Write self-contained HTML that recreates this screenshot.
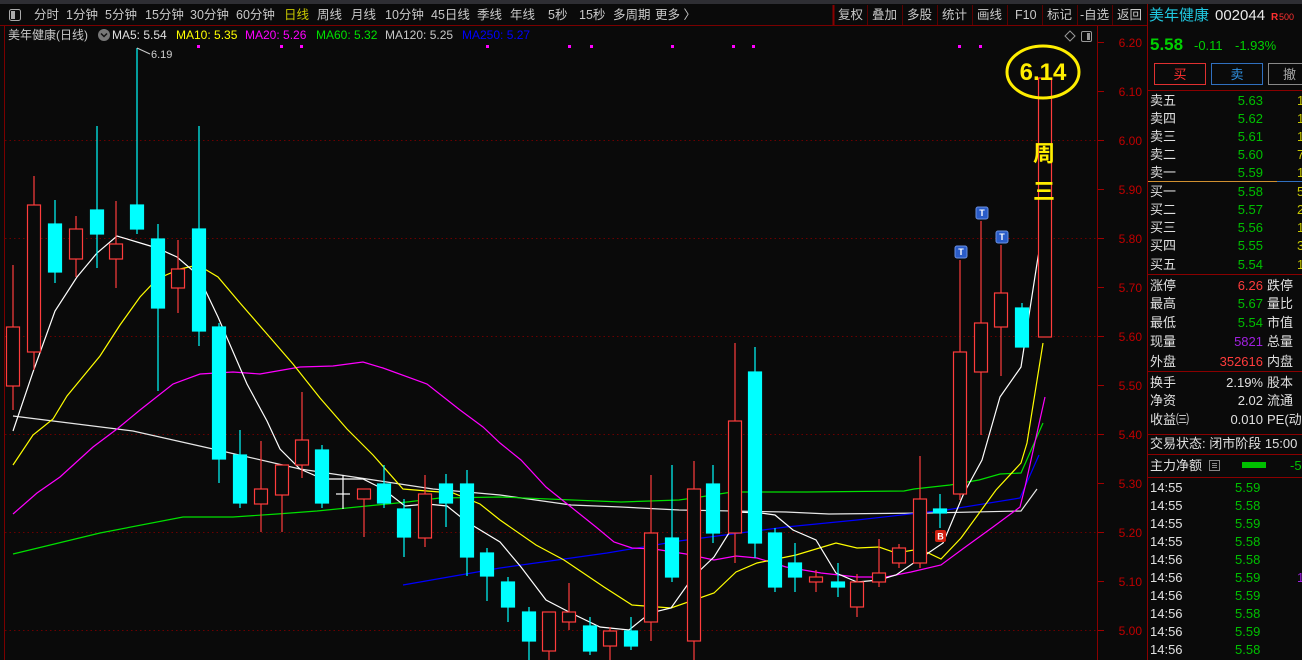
<!DOCTYPE html>
<html><head><meta charset="utf-8"><style>
html,body{margin:0;padding:0;background:#0a0a0a;width:1302px;height:660px;overflow:hidden}
svg{display:block}
text{font-family:"Liberation Sans","Noto Sans CJK SC",sans-serif}
</style></head><body>
<svg width="1302" height="660" viewBox="0 0 1302 660" xmlns="http://www.w3.org/2000/svg">
<rect width="1302" height="660" fill="#0a0a0a"/>
<!-- top strip -->
<rect x="0" y="0" width="1302" height="4" fill="#2e2e33"/>
<line x1="0" y1="25.5" x2="1147" y2="25.5" stroke="#7a0000"/>
<line x1="4.5" y1="26" x2="4.5" y2="660" stroke="#7a0000"/>
<line x1="1097.5" y1="26" x2="1097.5" y2="660" stroke="#8a0000"/>
<line x1="1147.5" y1="4" x2="1147.5" y2="660" stroke="#8a0000"/>
<line x1="833.5" y1="5" x2="833.5" y2="25" stroke="#8a0000" stroke-width="2"/>
<g stroke="#5a0000"><line x1="867.5" y1="5" x2="867.5" y2="25"/><line x1="902.5" y1="5" x2="902.5" y2="25"/><line x1="937.5" y1="5" x2="937.5" y2="25"/><line x1="972.5" y1="5" x2="972.5" y2="25"/><line x1="1007.5" y1="5" x2="1007.5" y2="25"/><line x1="1042.5" y1="5" x2="1042.5" y2="25"/><line x1="1077.5" y1="5" x2="1077.5" y2="25"/><line x1="1112.5" y1="5" x2="1112.5" y2="25"/></g>
<rect x="9.5" y="9.5" width="11" height="11" rx="2" fill="none" stroke="#aaa"/><rect x="11" y="11" width="4" height="8" fill="#aaa"/>
<g font-size="12.5" fill="#c8c8c8">
<text x="34" y="19">分时</text><text x="66" y="19">1分钟</text><text x="105" y="19">5分钟</text><text x="145" y="19">15分钟</text><text x="190" y="19">30分钟</text><text x="236" y="19">60分钟</text><text x="284" y="19" fill="#c8c800">日线</text><text x="317" y="19">周线</text><text x="351" y="19">月线</text><text x="385" y="19">10分钟</text><text x="431" y="19">45日线</text><text x="477" y="19">季线</text><text x="510" y="19">年线</text><text x="548" y="19">5秒</text><text x="579" y="19">15秒</text><text x="613" y="19">多周期</text><text x="655" y="19">更多 〉</text>
<text x="838" y="19">复权</text><text x="872" y="19">叠加</text><text x="907" y="19">多股</text><text x="942" y="19">统计</text><text x="977" y="19">画线</text><text x="1015" y="19">F10</text><text x="1047" y="19">标记</text><text x="1080" y="19">-自选</text><text x="1117" y="19">返回</text>
</g>
<!-- legend -->
<g font-size="12">
<text x="8" y="39" fill="#c8c8c8">美年健康(日线)</text>
<circle cx="104" cy="35" r="6" fill="#777"/><path d="M101 33.5l3 3 3-3" stroke="#111" stroke-width="1.5" fill="none"/>
<text x="112" y="39" fill="#e0e0e0">MA5: 5.54</text>
<text x="176" y="39" fill="#ffff00">MA10: 5.35</text>
<text x="245" y="39" fill="#ff00ff">MA20: 5.26</text>
<text x="316" y="39" fill="#00e000">MA60: 5.32</text>
<text x="385" y="39" fill="#c8c8c8">MA120: 5.25</text>
<text x="462" y="39" fill="#0000ff">MA250: 5.27</text>
</g>
<g fill="#ff00ff"><rect x="197" y="45" width="3" height="3"/><rect x="280" y="45" width="3" height="3"/><rect x="300" y="45" width="3" height="3"/><rect x="486" y="45" width="3" height="3"/><rect x="568" y="45" width="3" height="3"/><rect x="590" y="45" width="3" height="3"/><rect x="671" y="45" width="3" height="3"/><rect x="732" y="45" width="3" height="3"/><rect x="752" y="45" width="3" height="3"/><rect x="958" y="45" width="3" height="3"/><rect x="979" y="45" width="3" height="3"/></g>
<path d="M1070 31l5 5-5 5-5-5z" fill="none" stroke="#999"/>
<rect x="1081.5" y="31.5" width="10" height="10" rx="1.5" fill="none" stroke="#999"/><rect x="1087" y="33" width="3" height="7" fill="#999"/>
<!-- grid -->
<g stroke="#6a0000" stroke-dasharray="1.5 3">
<line x1="5" y1="140.5" x2="1097" y2="140.5"/><line x1="5" y1="238.5" x2="1097" y2="238.5"/><line x1="5" y1="336.5" x2="1097" y2="336.5"/><line x1="5" y1="434.5" x2="1097" y2="434.5"/><line x1="5" y1="532.5" x2="1097" y2="532.5"/><line x1="5" y1="630.5" x2="1097" y2="630.5"/>
</g>
<!-- axis -->
<g stroke="#a00000">
<line x1="1098" y1="42.5" x2="1104" y2="42.5"/><line x1="1098" y1="91.5" x2="1104" y2="91.5"/><line x1="1098" y1="140.5" x2="1104" y2="140.5"/><line x1="1098" y1="189.5" x2="1104" y2="189.5"/><line x1="1098" y1="238.5" x2="1104" y2="238.5"/><line x1="1098" y1="287.5" x2="1104" y2="287.5"/><line x1="1098" y1="336.5" x2="1104" y2="336.5"/><line x1="1098" y1="385.5" x2="1104" y2="385.5"/><line x1="1098" y1="434.5" x2="1104" y2="434.5"/><line x1="1098" y1="483.5" x2="1104" y2="483.5"/><line x1="1098" y1="532.5" x2="1104" y2="532.5"/><line x1="1098" y1="581.5" x2="1104" y2="581.5"/><line x1="1098" y1="630.5" x2="1104" y2="630.5"/>
</g>
<g font-size="12" fill="#c00000" text-anchor="end">
<text x="1142" y="47">6.20</text><text x="1142" y="96">6.10</text><text x="1142" y="145">6.00</text><text x="1142" y="194">5.90</text><text x="1142" y="243">5.80</text><text x="1142" y="292">5.70</text><text x="1142" y="341">5.60</text><text x="1142" y="390">5.50</text><text x="1142" y="439">5.40</text><text x="1142" y="488">5.30</text><text x="1142" y="537">5.20</text><text x="1142" y="586">5.10</text><text x="1142" y="635">5.00</text>
</g>
<!-- MA lines -->
<g fill="none" stroke-width="1.2">
<polyline stroke="#e6e6e6" points="13,416 133,431 213,449 300,469 367,479 433,489 500,495 571,505 621,507 679,510 786,512 829,514 929,513 1021,511 1037,489"/>
<polyline stroke="#00e000" points="13,554 100,533 183,517 233,517 277,514 317,511 367,506 407,502 440,498 500,497 621,502 650,501 679,500 700,497 732,492 807,492 904,491 914,489 950,485 979,480 1000,474 1021,473 1043,423"/>
<polyline stroke="#0000ff" points="403,585 500,568 607,553 679,541 786,527 857,520 946,510 1020,498 1039,455"/>
<polyline stroke="#ff00ff" points="13,514 37,493 60,477 93,447 117,429 140,410 173,384 200,374 233,372 260,374 300,367 333,366 363,362 383,368 427,384 460,410 483,427 500,443 521,460 546,487 571,507 596,527 614,542 632,548 654,549 686,554 714,560 736,556 757,558 786,567 821,573 857,577 886,577 911,572 941,565 964,548 993,527 1020,507 1025,487 1045,397"/>
<polyline stroke="#ffff00" points="13,465 33,435 53,419 67,396 100,356 120,325 140,297 157,279 180,269 198,265 218,277 240,303 267,334 293,364 320,398 347,429 373,455 403,489 427,491 453,493 480,504 500,520 536,545 564,560 604,587 632,605 671,608 714,593 736,572 757,563 796,555 836,543 857,548 879,547 896,553 920,549 941,559 961,538 996,490 1021,463 1027,443 1043,343"/>
<polyline stroke="#ffffff" points="13,431 33,372 55,311 77,277 97,253 117,236 137,242 157,248 177,257 198,275 218,317 247,384 267,421 280,449 300,469 323,479 343,479 363,479 383,489 405,506 427,504 447,506 467,522 500,542 521,567 546,600 571,613 600,627 629,630 650,613 671,608 693,577 714,557 729,533 736,512 761,513 775,515 793,530 816,540 836,573 857,582 879,580 896,575 918,560 943,543 964,493 982,460 1000,397 1021,367 1038,257 1044,228"/>
</g>
<!-- candles -->
<g stroke="#ff3c3c" fill="#0a0a0a" stroke-width="1.2">
<line x1="13" y1="265" x2="13" y2="410"/><rect x="6.5" y="327" width="13" height="59"/>
<line x1="34" y1="176" x2="34" y2="370"/><rect x="27.5" y="205" width="13" height="147"/>
<line x1="76" y1="216" x2="76" y2="277"/><rect x="69.5" y="229" width="13" height="30"/>
<line x1="116" y1="201" x2="116" y2="288"/><rect x="109.5" y="244" width="13" height="15"/>
<line x1="178" y1="240" x2="178" y2="313"/><rect x="171.5" y="269" width="13" height="19"/>
<line x1="261" y1="441" x2="261" y2="532"/><rect x="254.5" y="489" width="13" height="15"/>
<line x1="282" y1="465" x2="282" y2="532"/><rect x="275.5" y="465" width="13" height="30"/>
<line x1="302" y1="392" x2="302" y2="478"/><rect x="295.5" y="440" width="13" height="25"/>
<line x1="364" y1="489" x2="364" y2="537"/><rect x="357.5" y="489" width="13" height="10"/>
<line x1="425" y1="475" x2="425" y2="547"/><rect x="418.5" y="494" width="13" height="44"/>
<line x1="549" y1="612" x2="549" y2="660"/><rect x="542.5" y="612" width="13" height="39"/>
<line x1="569" y1="583" x2="569" y2="630"/><rect x="562.5" y="612" width="13" height="10"/>
<line x1="610" y1="627" x2="610" y2="660"/><rect x="603.5" y="631" width="13" height="15"/>
<line x1="651" y1="475" x2="651" y2="641"/><rect x="644.5" y="533" width="13" height="89"/>
<line x1="694" y1="461" x2="694" y2="660"/><rect x="687.5" y="489" width="13" height="152"/>
<line x1="735" y1="343" x2="735" y2="563"/><rect x="728.5" y="421" width="13" height="112"/>
<line x1="816" y1="570" x2="816" y2="592"/><rect x="809.5" y="577" width="13" height="5"/>
<line x1="857" y1="574" x2="857" y2="617"/><rect x="850.5" y="582" width="13" height="25"/>
<line x1="879" y1="539" x2="879" y2="587"/><rect x="872.5" y="573" width="13" height="9"/>
<line x1="899" y1="544" x2="899" y2="568"/><rect x="892.5" y="548" width="13" height="15"/>
<line x1="920" y1="456" x2="920" y2="568"/><rect x="913.5" y="499" width="13" height="64"/>
<line x1="960" y1="260" x2="960" y2="500"/><rect x="953.5" y="352" width="13" height="142"/>
<line x1="981" y1="221" x2="981" y2="435"/><rect x="974.5" y="323" width="13" height="49"/>
<line x1="1001" y1="245" x2="1001" y2="376"/><rect x="994.5" y="293" width="13" height="34"/>
<rect x="1038.5" y="78" width="13" height="259"/>
</g>
<g stroke="#00ffff" fill="#00ffff" stroke-width="1.2">
<line x1="55" y1="200" x2="55" y2="283"/><rect x="48.5" y="224" width="13" height="48"/>
<line x1="97" y1="126" x2="97" y2="268"/><rect x="90.5" y="210" width="13" height="24"/>
<line x1="137" y1="48" x2="137" y2="234"/><rect x="130.5" y="205" width="13" height="24"/>
<line x1="158" y1="224" x2="158" y2="391"/><rect x="151.5" y="239" width="13" height="69"/>
<line x1="199" y1="126" x2="199" y2="346"/><rect x="192.5" y="229" width="13" height="102"/>
<line x1="219" y1="323" x2="219" y2="483"/><rect x="212.5" y="327" width="13" height="132"/>
<line x1="240" y1="430" x2="240" y2="508"/><rect x="233.5" y="455" width="13" height="48"/>
<line x1="322" y1="445" x2="322" y2="508"/><rect x="315.5" y="450" width="13" height="53"/>
<line x1="384" y1="465" x2="384" y2="508"/><rect x="377.5" y="484" width="13" height="19"/>
<line x1="404" y1="499" x2="404" y2="557"/><rect x="397.5" y="509" width="13" height="28"/>
<line x1="446" y1="474" x2="446" y2="527"/><rect x="439.5" y="484" width="13" height="19"/>
<line x1="467" y1="470" x2="467" y2="576"/><rect x="460.5" y="484" width="13" height="73"/>
<line x1="487" y1="548" x2="487" y2="601"/><rect x="480.5" y="553" width="13" height="23"/>
<line x1="508" y1="577" x2="508" y2="622"/><rect x="501.5" y="582" width="13" height="25"/>
<line x1="529" y1="607" x2="529" y2="660"/><rect x="522.5" y="612" width="13" height="29"/>
<line x1="590" y1="617" x2="590" y2="655"/><rect x="583.5" y="626" width="13" height="25"/>
<line x1="631" y1="617" x2="631" y2="650"/><rect x="624.5" y="631" width="13" height="15"/>
<line x1="672" y1="465" x2="672" y2="582"/><rect x="665.5" y="538" width="13" height="39"/>
<line x1="713" y1="465" x2="713" y2="543"/><rect x="706.5" y="484" width="13" height="49"/>
<line x1="755" y1="347" x2="755" y2="558"/><rect x="748.5" y="372" width="13" height="171"/>
<line x1="775" y1="528" x2="775" y2="592"/><rect x="768.5" y="533" width="13" height="54"/>
<line x1="795" y1="543" x2="795" y2="592"/><rect x="788.5" y="563" width="13" height="14"/>
<line x1="838" y1="563" x2="838" y2="597"/><rect x="831.5" y="582" width="13" height="5"/>
<line x1="940" y1="494" x2="940" y2="528"/><rect x="933.5" y="509" width="13" height="4"/>
<line x1="1022" y1="303" x2="1022" y2="347"/><rect x="1015.5" y="308" width="13" height="39"/>
</g>
<g stroke="#fff" stroke-width="1.2"><line x1="343" y1="475" x2="343" y2="509"/><line x1="336" y1="494" x2="350" y2="494"/></g>
<!-- 6.19 label -->
<path d="M137 48l13 6" stroke="#ccc" fill="none"/>
<text x="151" y="58" font-size="11" fill="#d0d0d0">6.19</text>
<!-- T markers -->
<g font-size="9" fill="#fff" text-anchor="middle" font-weight="bold">
<rect x="955" y="246" width="12" height="12" rx="2" fill="#2a5cc8" stroke="#6a90e0"/><text x="961" y="255">T</text>
<rect x="976" y="207" width="12" height="12" rx="2" fill="#2a5cc8" stroke="#6a90e0"/><text x="982" y="216">T</text>
<rect x="996" y="231" width="12" height="12" rx="2" fill="#2a5cc8" stroke="#6a90e0"/><text x="1002" y="240">T</text>
<rect x="935" y="530" width="11" height="12" rx="2" fill="#d02010"/><text x="940.5" y="539.5">B</text>
</g>
<!-- annotation -->
<ellipse cx="1043" cy="72" rx="36" ry="26" fill="none" stroke="#ffee00" stroke-width="3"/>
<text x="1043" y="80" font-size="24" font-weight="bold" fill="#ffee00" text-anchor="middle">6.14</text>
<text x="1044" y="161" font-size="22" font-weight="bold" fill="#ffee00" text-anchor="middle">周</text>
<text x="1044" y="199" font-size="22" font-weight="bold" fill="#ffee00" text-anchor="middle">三</text>
<!-- right panel -->
<text x="1149" y="20" font-size="15" fill="#20c8e0">美年健康</text>
<text x="1215" y="20" font-size="15" fill="#e8e8e8">002044</text>
<text x="1271" y="20" font-size="10" fill="#ff3030" font-weight="bold">R</text><text x="1279" y="20" font-size="9" fill="#ff3030">500</text>
<text x="1150" y="50" font-size="17" font-weight="bold" fill="#00d000">5.58</text>
<text x="1194" y="50" font-size="13" fill="#00d000">-0.11</text>
<text x="1235" y="50" font-size="13" fill="#00d000">-1.93%</text>
<rect x="1154.5" y="63.5" width="51" height="21" fill="none" stroke="#e03030"/><text x="1180" y="79" font-size="13" fill="#ff3030" text-anchor="middle">买</text>
<rect x="1211.5" y="63.5" width="51" height="21" fill="none" stroke="#3070c0"/><text x="1237" y="79" font-size="13" fill="#3090e0" text-anchor="middle">卖</text>
<rect x="1268.5" y="63.5" width="40" height="21" fill="none" stroke="#888"/><text x="1283" y="79" font-size="13" fill="#aaa">撤</text>
<line x1="1148" y1="90.5" x2="1302" y2="90.5" stroke="#8a0000"/>
<line x1="1148" y1="181.5" x2="1277" y2="181.5" stroke="#d09030"/><line x1="1277" y1="181.5" x2="1302" y2="181.5" stroke="#3070c0"/>
<line x1="1148" y1="274.5" x2="1302" y2="274.5" stroke="#8a0000"/>
<line x1="1148" y1="371.5" x2="1302" y2="371.5" stroke="#8a0000"/>
<line x1="1148" y1="434.5" x2="1302" y2="434.5" stroke="#8a0000"/>
<line x1="1148" y1="454.5" x2="1302" y2="454.5" stroke="#8a0000"/>
<line x1="1148" y1="477.5" x2="1302" y2="477.5" stroke="#8a0000"/>
<g font-size="13" fill="#e0e0e0">
<text x="1150" y="105">卖五</text><text x="1150" y="123">卖四</text><text x="1150" y="141">卖三</text><text x="1150" y="159">卖二</text><text x="1150" y="177">卖一</text>
<text x="1150" y="196">买一</text><text x="1150" y="214">买二</text><text x="1150" y="232">买三</text><text x="1150" y="250">买四</text><text x="1150" y="269">买五</text>
<text x="1150" y="290">涨停</text><text x="1150" y="308">最高</text><text x="1150" y="327">最低</text><text x="1150" y="346">现量</text><text x="1150" y="366">外盘</text>
<text x="1150" y="387">换手</text><text x="1150" y="405">净资</text><text x="1150" y="424">收益㈢</text>
<text x="1267" y="290">跌停</text><text x="1267" y="308">量比</text><text x="1267" y="327">市值</text><text x="1267" y="346">总量</text><text x="1267" y="366">内盘</text>
<text x="1267" y="387">股本</text><text x="1267" y="405">流通</text><text x="1267" y="424">PE(动</text>
<text x="1150" y="448">交易状态: 闭市阶段 15:00</text>
<text x="1150" y="470">主力净额</text>
</g>
<rect x="1209.5" y="460.5" width="10" height="10" fill="none" stroke="#888"/><g stroke="#888"><line x1="1212" y1="463.5" x2="1217" y2="463.5"/><line x1="1212" y1="465.5" x2="1217" y2="465.5"/><line x1="1212" y1="467.5" x2="1217" y2="467.5"/></g>
<rect x="1242" y="462" width="24" height="6" fill="#00c000"/>
<text x="1290" y="470" font-size="13" fill="#00c000">-5</text>
<g font-size="13" fill="#00c000" text-anchor="end">
<text x="1263" y="105">5.63</text><text x="1263" y="123">5.62</text><text x="1263" y="141">5.61</text><text x="1263" y="159">5.60</text><text x="1263" y="177">5.59</text>
<text x="1263" y="196">5.58</text><text x="1263" y="214">5.57</text><text x="1263" y="232">5.56</text><text x="1263" y="250">5.55</text><text x="1263" y="269">5.54</text>
<text x="1263" y="290" fill="#ff3c3c">6.26</text><text x="1263" y="308">5.67</text><text x="1263" y="327">5.54</text>
<text x="1263" y="346" fill="#a020e0">5821</text><text x="1263" y="366" fill="#ff3c3c">352616</text>
<text x="1263" y="387" fill="#e0e0e0">2.19%</text><text x="1263" y="405" fill="#e0e0e0">2.02</text><text x="1263" y="424" fill="#e0e0e0">0.010</text>
</g>
<g font-size="13" fill="#c8c800">
<text x="1297" y="105">1</text><text x="1297" y="123">1</text><text x="1297" y="141">1</text><text x="1297" y="159">7</text><text x="1297" y="177">1</text>
<text x="1297" y="196">5</text><text x="1297" y="214">2</text><text x="1297" y="232">1</text><text x="1297" y="250">3</text><text x="1297" y="269">1</text>
</g>
<g font-size="13" fill="#e0e0e0">
<text x="1150" y="492">14:55</text><text x="1150" y="510">14:55</text><text x="1150" y="528">14:55</text><text x="1150" y="546">14:55</text><text x="1150" y="564">14:56</text><text x="1150" y="582">14:56</text><text x="1150" y="600">14:56</text><text x="1150" y="618">14:56</text><text x="1150" y="636">14:56</text><text x="1150" y="654">14:56</text>
</g>
<g font-size="13" fill="#00c000">
<text x="1235" y="492">5.59</text><text x="1235" y="510">5.58</text><text x="1235" y="528">5.59</text><text x="1235" y="546">5.58</text><text x="1235" y="564">5.58</text><text x="1235" y="582">5.59</text><text x="1235" y="600">5.59</text><text x="1235" y="618">5.58</text><text x="1235" y="636">5.59</text><text x="1235" y="654">5.58</text>
</g>
<text x="1297" y="582" font-size="13" fill="#a020e0">1</text>
</svg>
</body></html>
